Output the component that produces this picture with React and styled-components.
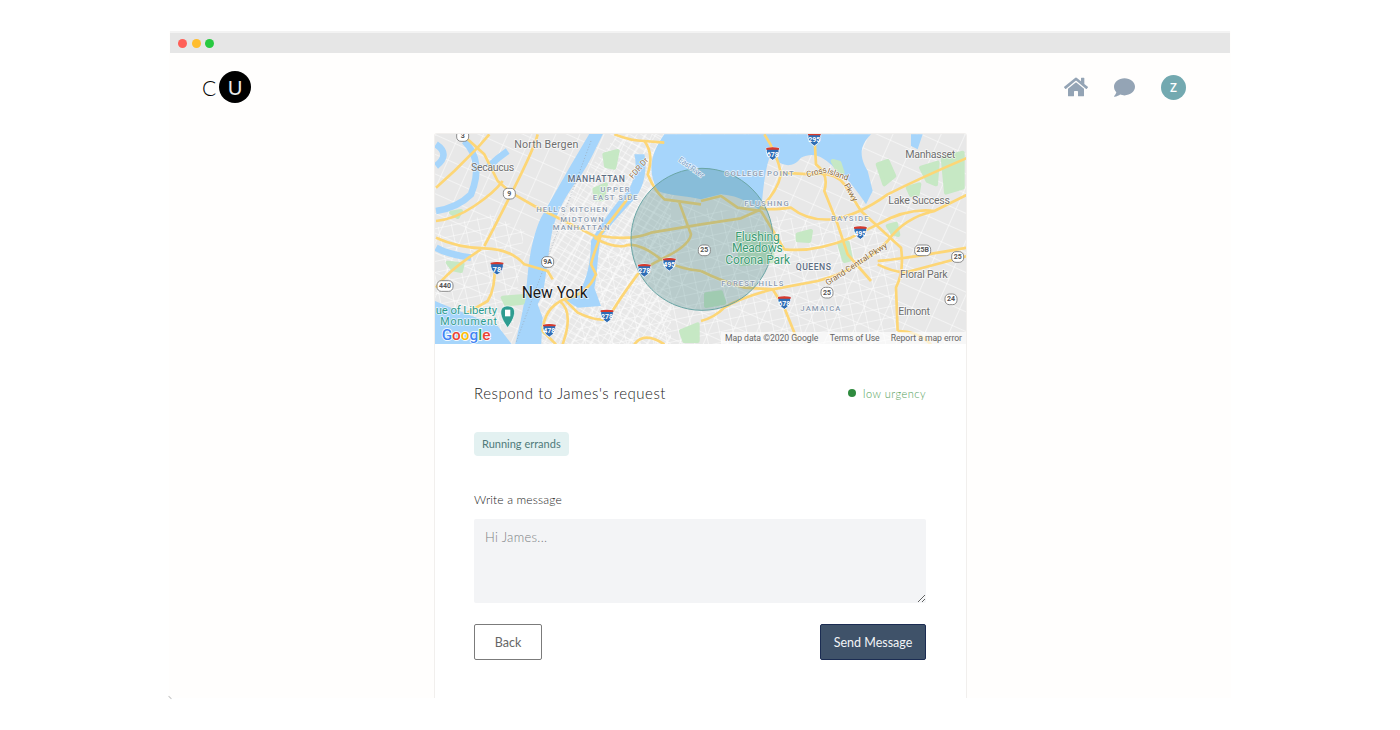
import React from 'react';
import styled, { createGlobalStyle } from 'styled-components';
import { FaHome, FaComment } from 'react-icons/fa';

const GlobalStyle = createGlobalStyle`
  html, body {
    margin: 0;
    padding: 0;
    background: #fff;
    font-family: 'Lato', 'Liberation Sans', sans-serif;
  }
`;

const Page = styled.div`
  height: 730px;
  padding-top: 31px;
  box-sizing: border-box;
  overflow: hidden;
`;

const BrowserWindow = styled.div`
  position: relative;
  width: 1062px;
  height: 667px;
  margin: 0 auto;
  background: #fffefd;
  display: flex;
  flex-direction: column;

  &::after {
    content: '';
    position: absolute;
    left: -1px;
    bottom: 0;
    width: 4px;
    height: 1px;
    background: #c4c4c4;
    transform: rotate(45deg);
  }
`;

const TitleBar = styled.div`
  height: 20px;
  flex: none;
  margin: 2px 1px 0;
  background: #e6e6e6;
  box-shadow: 0 -2px 0 #f3f3f3;
  display: flex;
  align-items: center;
  gap: 4.5px;
  padding-left: 8px;
`;

const Light = styled.span`
  width: 9px;
  height: 9px;
  border-radius: 50%;
  background: ${(p) => p.$color};
`;

const Header = styled.header`
  height: 80px;
  flex: none;
  display: flex;
  align-items: center;
  justify-content: space-between;
  padding: 0 45px 12px 33px;
  box-sizing: border-box;
`;

const Logo = styled.div`
  display: flex;
  align-items: center;
  gap: 3px;
`;

const LogoC = styled.span`
  font-size: 21px;
  font-weight: 300;
  line-height: 1;
  color: #000;
`;

const LogoU = styled.span`
  width: 32px;
  height: 32px;
  border-radius: 50%;
  background: #000;
  color: #e8e8e8;
  font-size: 20px;
  font-weight: 400;
  display: flex;
  align-items: center;
  justify-content: center;
`;

const Nav = styled.nav`
  display: flex;
  align-items: center;
  gap: 26px;
  color: #94a4b5;
`;

const Avatar = styled.span`
  width: 25px;
  height: 25px;
  border-radius: 50%;
  background: #73a9b0;
  color: #fff;
  font-family: 'Open Sans', sans-serif;
  font-size: 12px;
  font-weight: 600;
  display: flex;
  align-items: center;
  justify-content: center;
`;

const Card = styled.main`
  width: 533px;
  flex: 1;
  margin-left: 265px;
  background: #fff;
  border: 1px solid #f1efed;
  border-bottom: 0;
  border-radius: 3px 3px 0 0;
  box-sizing: border-box;
  overflow: hidden;
`;

const MapFrame = styled.svg`
  display: block;
  width: 531px;
  height: 210px;
`;

const MapLabel = styled.text`
  font-family: 'Roboto', 'Liberation Sans', sans-serif;
  font-size: ${(p) => p.$size || 30}px;
  font-weight: ${(p) => p.$weight || 400};
  fill: ${(p) => p.$color || '#6f6f6f'};
  dominant-baseline: central;
  paint-order: stroke;
  stroke: rgba(255, 255, 255, 0.75);
  stroke-width: 4px;
`;

const ShieldText = styled.text`
  font-family: 'Roboto', 'Liberation Sans', sans-serif;
  font-size: ${(p) => p.$size || 19}px;
  font-weight: 700;
  fill: ${(p) => p.$color};
  text-anchor: middle;
  dominant-baseline: central;
`;

const GoogleMark = styled.text`
  font-family: 'Roboto', 'Liberation Sans', sans-serif;
  font-size: 46px;
  font-weight: 500;
  paint-order: stroke;
  stroke: #fff;
  stroke-width: 5px;
  dominant-baseline: central;
`;

const AttributionText = styled.text`
  font-family: 'Roboto', 'Liberation Sans', sans-serif;
  font-size: 26px;
  fill: #666;
  dominant-baseline: central;
`;

const Body = styled.section`
  padding: 37px 40px 0 39px;
`;

const TitleRow = styled.div`
  display: flex;
  align-items: center;
  justify-content: space-between;
  height: 24px;
`;

const Title = styled.h1`
  margin: 0;
  font-size: 15px;
  font-weight: 300;
  letter-spacing: 0.52px;
  color: #222;
`;

const Urgency = styled.div`
  display: flex;
  align-items: center;
  gap: 7px;
  font-size: 11px;
  font-weight: 300;
  letter-spacing: 0.5px;
  color: #4f9d55;
`;

const Dot = styled.span`
  width: 8px;
  height: 8px;
  border-radius: 50%;
  background: #2f8b3f;
`;

const Tag = styled.span`
  display: inline-block;
  margin-top: 27px;
  height: 24px;
  line-height: 24px;
  padding: 0 8px;
  border-radius: 4px;
  background: #e3f1f1;
  color: #4f7a7a;
  font-size: 11px;
  font-weight: 400;
`;

const FieldLabel = styled.label`
  display: block;
  margin-top: 35px;
  font-size: 12px;
  font-weight: 300;
  line-height: 18px;
  letter-spacing: 0.15px;
  color: #222;
`;

const MessageBox = styled.textarea`
  display: block;
  width: 452px;
  height: 84px;
  margin-top: 10px;
  padding: 10px 11px;
  box-sizing: border-box;
  border: 0;
  border-radius: 2px;
  background: #f3f4f6;
  font-family: inherit;
  font-size: 13px;
  font-weight: 300;
  letter-spacing: 0.3px;
  resize: vertical;

  &::placeholder {
    color: #7d7f83;
  }
`;

const Actions = styled.div`
  display: flex;
  justify-content: space-between;
  width: 452px;
  margin-top: 21px;
`;

const Button = styled.button`
  height: 36px;
  width: ${(p) => p.$width}px;
  box-sizing: border-box;
  border-radius: 2px;
  border: 1px solid ${(p) => (p.$primary ? '#1b2c52' : '#7b7b7b')};
  background: ${(p) => (p.$primary ? '#3f5269' : '#fff')};
  color: ${(p) => (p.$primary ? '#f2f4f7' : '#666')};
  font-family: inherit;
  font-size: 12.5px;
  font-weight: 400;
`;

const WATER = '#a6d5fb';
const HIGHWAY = '#fdd676';
const PARK = '#c6e8c4';

const leftRoads = [
  'M110,25 L160,70 L200,150 L240,185 L310,225 L370,255',
  'M15,170 L70,120 L140,50 L175,10',
  'M15,270 Q70,265 130,225 T215,150',
  'M15,320 Q80,350 160,352 T280,400 L350,420 L365,445',
  'M160,345 Q190,290 250,170 T320,10',
  'M190,400 Q195,470 170,510 L110,545',
  'M15,470 Q50,420 150,355',
  'M510,312 Q490,360 480,400 L495,430 Q470,490 400,505 Q340,530 335,600 L375,640',
  'M400,505 L440,545 Q490,570 530,565 Q560,510 620,430 Q650,405 690,385',
  'M490,320 Q540,350 580,345 Q620,330 690,385 Q750,415 810,420',
  'M510,315 Q600,330 660,305 L810,280',
  'M370,255 L500,320 L600,190',
  'M640,30 Q670,70 650,130 Q670,180 700,205 L810,220',
  'M550,10 Q600,30 640,30 L700,35',
  'M745,215 Q765,270 780,310 Q775,345 690,385',
  'M385,510 Q430,540 395,640',
  'M700,640 Q640,600 610,640',
];

const rightRoads = [
  'M190,10 Q230,70 240,130 Q230,180 180,230 Q190,240 270,230 Q320,270 390,265 Q470,255 560,190 Q660,140 800,80',
  'M340,10 L345,100 Q385,130 370,180 L410,280 L440,370 L510,450',
  'M240,125 L330,130 Q400,120 430,160 L480,240 L600,350 Q610,420 585,470 L590,600',
  'M180,240 L250,355 Q340,365 450,320 L530,280 Q620,230 700,240 L800,190',
  'M0,570 Q40,560 70,530 Q120,500 215,475 L250,530 L290,630',
  'M215,475 L350,450 Q470,420 560,330 Q610,260 700,240',
  'M530,390 Q600,385 800,350',
  'M530,400 Q570,420 610,425 L800,375',
  'M590,600 Q650,600 690,640',
  'M0,210 L60,195 L110,230 L180,240',
  'M0,280 L120,262 L180,235',
  'M0,420 Q60,450 130,470 L215,475',
];

const leftStreams = [
  'M100,30 Q160,90 120,190 Q80,230 15,240',
  'M15,40 Q60,70 15,105',
  'M170,110 Q200,80 230,60',
  'M15,350 Q50,370 120,380',
];

const leftWater = [
  'M480,0 L520,0 C490,60 470,110 430,160 C395,210 370,260 360,320 C350,380 345,440 335,490 L320,520 L335,560 L330,650 L250,650 C270,570 285,500 290,430 C295,370 310,300 330,260 C370,190 420,100 480,0 Z',
  'M640,70 C650,110 640,170 610,205 C570,245 530,295 512,315 C500,350 500,430 490,470 L510,525 L440,530 L400,505 L440,490 C470,450 480,380 480,330 C510,280 550,220 590,180 C610,150 620,110 610,70 Z',
  'M700,10 L810,10 L810,205 C770,195 720,195 680,180 C655,130 650,80 700,10 Z',
  'M12,510 L60,530 L200,585 L250,650 L12,650 Z',
];

const rightWater = [
  'M0,10 L510,10 C480,40 470,70 500,120 L515,180 L495,220 C470,180 430,130 400,110 C370,80 340,60 300,80 C270,120 230,100 210,70 C190,110 185,200 180,240 C150,220 120,195 60,190 L0,205 Z',
  'M630,10 L665,10 L650,55 L630,45 Z',
  'M160,360 L180,360 L185,385 L165,390 Z',
];

const leftParks = [
  'M520,70 L560,60 L550,110 L525,105 Z',
  'M490,175 L525,160 L515,205 L495,205 Z',
  'M215,500 L280,495 L275,515 L225,520 Z',
  'M50,395 L95,400 L90,420 L65,415 Z',
  'M750,600 L800,580 L800,630 L760,630 Z',
  'M335,590 L360,585 L360,605 L340,605 Z',
  'M60,245 L90,240 L80,258 Z',
];

const rightParks = [
  'M110,310 L210,310 L215,390 L120,400 Z',
  'M15,490 L60,484 L70,515 L15,525 Z',
  'M530,100 L560,90 L580,135 L550,160 Z',
  'M660,110 L710,95 L705,160 L680,150 Z',
  'M725,80 L785,65 L785,170 L735,185 Z',
  'M290,310 L330,300 L325,330 L290,328 Z',
  'M395,90 L415,95 L425,125 L405,110 Z',
  'M560,285 L585,278 L592,312 L575,308 Z',
  'M620,170 L655,160 L650,190 L630,192 Z',
  'M415,340 L440,335 L450,385 L430,390 Z',
];

const leftLabels = [
  { t: 'North Bergen', x: 250, y: 40, w: 192, s: 32 },
  { t: 'Secaucus', x: 120, y: 110, w: 130, s: 32 },
  { t: 'MANHATTAN', x: 410, y: 143, w: 172, s: 26, c: '#5d6d82', b: 500 },
  { t: 'UPPER', x: 508, y: 176, w: 88, s: 23, c: '#8c9bb0', b: 500 },
  { t: 'EAST SIDE', x: 485, y: 200, w: 135, s: 23, c: '#8c9bb0', b: 500 },
  { t: "HELL'S KITCHEN", x: 316, y: 236, w: 213, s: 23, c: '#8c9bb0', b: 500 },
  { t: 'MIDTOWN', x: 388, y: 266, w: 130, s: 23, c: '#8c9bb0', b: 500 },
  { t: 'MANHATTAN', x: 365, y: 290, w: 170, s: 23, c: '#8c9bb0', b: 500 },
  { t: 'New York', x: 272, y: 485, w: 198, s: 47, c: '#1a1a1a' },
  { t: 'ue of Liberty', x: 14, y: 538, w: 184, s: 34, c: '#2e9c90' },
  { t: 'Monument', x: 28, y: 571, w: 170, s: 32, c: '#2e9c90' },
];

const rightLabels = [
  { t: 'COLLEGE POINT', x: 70, y: 126, w: 208, s: 23, c: '#8c9bb0', b: 500 },
  { t: 'FLUSHING', x: 130, y: 217, w: 133, s: 23, c: '#8c9bb0', b: 500 },
  { t: 'BAYSIDE', x: 390, y: 262, w: 113, s: 23, c: '#8c9bb0', b: 500 },
  { t: 'Manhasset', x: 613, y: 71, w: 150, s: 32 },
  { t: 'Lake Success', x: 562, y: 207, w: 185, s: 32 },
  { t: 'Flushing', x: 103, y: 318, w: 133, s: 36, c: '#3a9a72' },
  { t: 'Meadows', x: 93, y: 352, w: 152, s: 36, c: '#3a9a72' },
  { t: 'Corona Park', x: 73, y: 387, w: 194, s: 36, c: '#3a9a72' },
  { t: 'QUEENS', x: 284, y: 408, w: 106, s: 26, c: '#5d6d82', b: 500 },
  { t: 'FOREST HILLS', x: 61, y: 458, w: 186, s: 23, c: '#8c9bb0', b: 500 },
  { t: 'JAMAICA', x: 298, y: 533, w: 120, s: 23, c: '#8c9bb0', b: 500 },
  { t: 'Floral Park', x: 597, y: 431, w: 143, s: 32 },
  { t: 'Elmont', x: 592, y: 541, w: 95, s: 32 },
];

const slantedLabels = [
  { t: 'FDR Dr', x: 600, y: 140, a: -50, w: 74, c: '#94704a', s: 24 },
  { t: 'East River', x: 745, y: 84, a: 36, w: 88, c: '#7a9cc4', s: 24 },
  { t: 'Cross', x: 1126, y: 130, a: -14, w: 62, c: '#8a6a3c', s: 25 },
  { t: 'Island', x: 1190, y: 118, a: 20, w: 66, c: '#8a6a3c', s: 25 },
  { t: 'Pkwy', x: 1246, y: 158, a: 60, w: 58, c: '#8a6a3c', s: 25 },
  { t: 'Grand Central Pkwy', x: 1185, y: 457, a: -33, w: 215, c: '#8a6a3c', s: 25 },
];

const interstates = [
  { x: 198, y: 412, n: '78' },
  { x: 640, y: 418, n: '278' },
  { x: 715, y: 400, n: '495' },
  { x: 528, y: 555, n: '278' },
  { x: 355, y: 598, n: '478' },
  { x: 1025, y: 68, n: '678' },
  { x: 1150, y: 25, n: '295' },
  { x: 1288, y: 305, n: '495' },
  { x: 1060, y: 515, n: '678' },
];

const routes = [
  { x: 235, y: 188, n: '9' },
  { x: 350, y: 393, n: '9A' },
  { x: 42, y: 465, n: '440' },
  { x: 95, y: 15, n: '3' },
  { x: 820, y: 358, n: '25' },
  { x: 1475, y: 358, n: '25B' },
  { x: 1580, y: 378, n: '25' },
  { x: 1560, y: 505, n: '24' },
  { x: 1188, y: 485, n: '25' },
];

const Interstate = ({ x, y, n }) => (
  <g transform={`translate(${x} ${y})`}>
    <path d="M-19,-17 Q0,-21 19,-17 Q22,8 0,20 Q-22,8 -19,-17 Z" fill="#2f6db5" stroke="#fff" strokeWidth="2.5" />
    <path d="M-19,-17 Q0,-21 19,-17 L19.3,-12 L-19.3,-12 Z" fill="#d8392b" />
    <ShieldText y={3} $color="#fff" $size={n.length > 2 ? 21 : 23}>{n}</ShieldText>
  </g>
);

const Route = ({ x, y, n }) => (
  <g transform={`translate(${x} ${y})`}>
    <rect x={n.length > 2 ? -24 : -18} y={-16} width={n.length > 2 ? 48 : 36} height={32} rx={13} fill="#fff" stroke="#777" strokeWidth="2.5" />
    <ShieldText $color="#555" $size={21}>{n}</ShieldText>
  </g>
);

const Labels = ({ items }) =>
  items.map((l) => (
    <MapLabel key={l.t + l.x} x={l.x} y={l.y} textLength={l.w} $size={l.s} $color={l.c} $weight={l.b}>
      {l.t}
    </MapLabel>
  ));

const Parks = ({ items }) =>
  items.map((d) => <path key={d} d={d} fill={PARK} stroke={PARK} strokeWidth="12" strokeLinejoin="round" />);

const Highways = ({ items }) =>
  items.map((d) => <path key={d} d={d} fill="none" stroke={HIGHWAY} strokeWidth="8" strokeLinejoin="round" />);

const CityMap = () => (
  <MapFrame viewBox="0 0 1593 630" preserveAspectRatio="none">
    <defs>
      <pattern id="denseGrid" width="18" height="48" patternUnits="userSpaceOnUse" patternTransform="rotate(-58)">
        <path d="M0,0 H18 M0,24 H18 M0,0 V48" stroke="#fff" strokeWidth="3" />
      </pattern>
      <pattern id="cityGrid" width="40" height="32" patternUnits="userSpaceOnUse" patternTransform="rotate(-12)">
        <path d="M0,0 H40 M0,0 V32" stroke="#fff" strokeWidth="3" />
      </pattern>
      <pattern id="townGrid" width="66" height="54" patternUnits="userSpaceOnUse" patternTransform="rotate(24)">
        <path d="M0,0 H66 M0,0 V54" stroke="#fff" strokeWidth="3" />
      </pattern>
    </defs>
    <rect width="1593" height="630" fill="#e8e8e8" />
    <rect width="1593" height="630" fill="url(#townGrid)" />
    <g transform="translate(-12 -9)">
      <path d="M300,640 L320,300 L560,10 L720,10 L720,640 Z" fill="url(#denseGrid)" />
      <path d="M520,360 L820,230 L1400,300 L1400,640 L420,640 Z" fill="url(#cityGrid)" />
      <path d="M12,640 L12,290 L180,250 L280,300 L240,640 Z" fill="url(#cityGrid)" />
      {leftStreams.map((d) => (
        <path key={d} d={d} fill="none" stroke={WATER} strokeWidth="20" />
      ))}
      {leftWater.map((d) => (
        <path key={d} d={d} fill={WATER} />
      ))}
      <path d="M480,30 L255,635" stroke="#9aa3ad" strokeWidth="2" strokeDasharray="3 6" />
      <Parks items={leftParks} />
      <Highways items={leftRoads} />
    </g>
    <g transform="translate(798 -9)">
      {rightWater.map((d) => (
        <path key={d} d={d} fill={WATER} />
      ))}
      <Parks items={rightParks} />
      <Highways items={rightRoads} />
    </g>
    <circle cx="801" cy="316" r="213" fill="rgba(62, 128, 128, 0.28)" stroke="#6aa5a5" strokeWidth="3" />
    <g transform="translate(-12 -9)">
      <Labels items={leftLabels} />
      {slantedLabels.map((l) => (
        <MapLabel key={l.t} x={l.x} y={l.y} textLength={l.w} transform={`rotate(${l.a} ${l.x} ${l.y})`} $size={l.s} $color={l.c}>
          {l.t}
        </MapLabel>
      ))}
      {interstates.map((s) => (
        <Interstate key={s.x} {...s} />
      ))}
      {routes.map((s) => (
        <Route key={s.x} {...s} />
      ))}
      <path d="M230,525 C205,525 200,550 230,590 C260,550 255,525 230,525 Z" fill="#2e9c90" stroke="#fff" strokeWidth="2" />
      <path d="M222,536 H238 V556 H222 Z" fill="#fff" />
      <GoogleMark x={32} y={612}>
        <tspan fill="#4285f4">G</tspan>
        <tspan fill="#ea4335">o</tspan>
        <tspan fill="#fbbc05">o</tspan>
        <tspan fill="#4285f4">g</tspan>
        <tspan fill="#34a853">l</tspan>
        <tspan fill="#ea4335">e</tspan>
      </GoogleMark>
    </g>
    <g transform="translate(798 -9)">
      <Labels items={rightLabels} />
      <rect x="60" y="603" width="740" height="36" fill="rgba(255, 255, 255, 0.65)" />
      <AttributionText x={72} y={622} textLength={280}>Map data ©2020 Google</AttributionText>
      <AttributionText x={386} y={622} textLength={150}>Terms of Use</AttributionText>
      <AttributionText x={569} y={622} textLength={214}>Report a map error</AttributionText>
    </g>
  </MapFrame>
);

const App = () => (
  <Page>
    <GlobalStyle />
    <BrowserWindow>
      <TitleBar>
        <Light $color="#ff5f57" />
        <Light $color="#ffbd2e" />
        <Light $color="#28c940" />
      </TitleBar>
      <Header>
        <Logo>
          <LogoC>C</LogoC>
          <LogoU>U</LogoU>
        </Logo>
        <Nav>
          <FaHome size={24} />
          <FaComment size={21} />
          <Avatar>Z</Avatar>
        </Nav>
      </Header>
      <Card>
        <CityMap />
        <Body>
          <TitleRow>
            <Title>Respond to James's request</Title>
            <Urgency>
              <Dot />
              low urgency
            </Urgency>
          </TitleRow>
          <Tag>Running errands</Tag>
          <FieldLabel htmlFor="message">Write a message</FieldLabel>
          <MessageBox id="message" placeholder="Hi James..." />
          <Actions>
            <Button $width={68}>Back</Button>
            <Button $primary $width={106}>Send Message</Button>
          </Actions>
        </Body>
      </Card>
    </BrowserWindow>
  </Page>
);

export default App;
